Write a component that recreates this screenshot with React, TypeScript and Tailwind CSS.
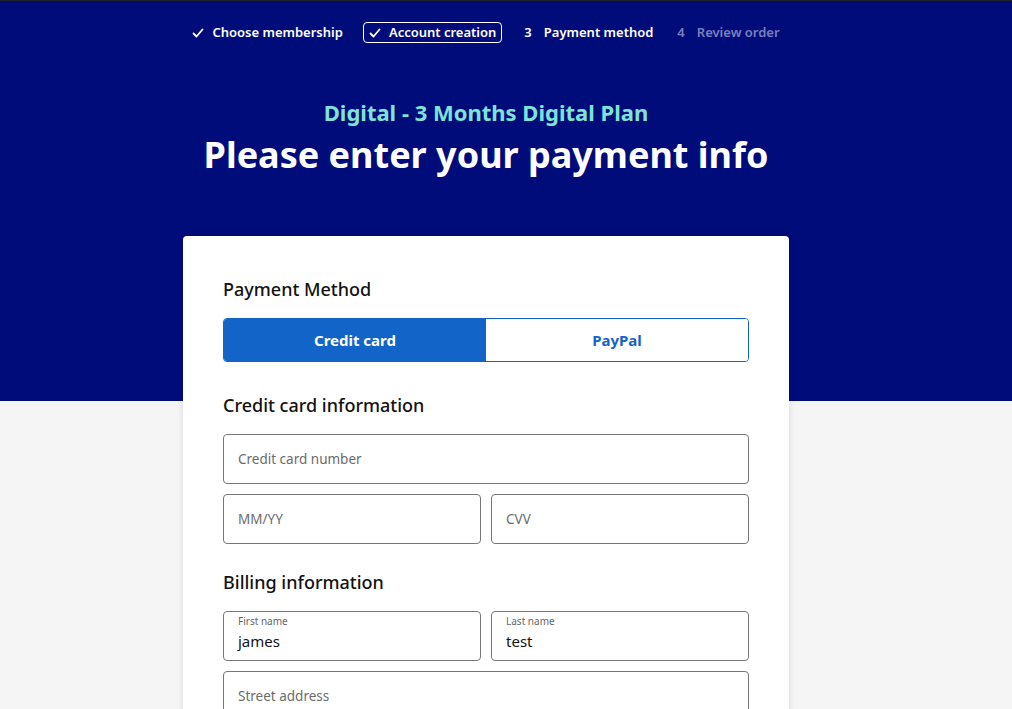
import React from 'react'

function Check() {
  return (
    <svg width="12" height="12" viewBox="0 0 12 12" fill="none">
      <path d="M1.5 6.5 4.5 9.5 10.5 2.5" stroke="white" strokeWidth="1.8" strokeLinecap="round" strokeLinejoin="round" />
    </svg>
  )
}

function Stepper() {
  return (
    <div className="flex h-[63px] items-center justify-center gap-5 pr-10 text-[13px] font-semibold text-white">
      <div className="flex items-center gap-2">
        <Check />
        <span>Choose membership</span>
      </div>
      <div className="flex h-[21px] items-center gap-2 rounded-[4px] border border-white px-[5px]">
        <Check />
        <span>Account creation</span>
      </div>
      <div className="flex items-center gap-3 pl-[2px]">
        <span>3</span>
        <span>Payment method</span>
      </div>
      <div className="flex items-center gap-3 pl-1 text-[#7b80bb]">
        <span>4</span>
        <span>Review order</span>
      </div>
    </div>
  )
}

function Field({ placeholder, label, value, grow }: { placeholder?: string; label?: string; value?: string; grow?: boolean }) {
  return (
    <div
      className={
        grow
          ? 'flex h-[50px] min-w-0 flex-1 flex-col rounded-[4px] border border-[#767676] bg-white px-[14px]'
          : 'flex h-[50px] w-full shrink-0 flex-col rounded-[4px] border border-[#767676] bg-white px-[14px]'
      }
    >
      {label ? (
        <div className="pt-[3px]">
          <div className="text-[10px] leading-3 text-[#666]">{label}</div>
          <div className="mt-[4px] text-[15px] leading-5 text-[#121212]">{value}</div>
        </div>
      ) : (
        <div className="flex h-full items-center text-[13.5px] text-[#6b6b6b]">{placeholder}</div>
      )}
    </div>
  )
}

export default function App() {
  return (
    <div className="min-h-screen bg-[#f5f5f5] font-['Noto_Sans',sans-serif]">
      <div className="h-[401px] border-t border-[#222] bg-[#000c7a]">
        <Stepper />
        <div className="mt-[34px] pr-10 text-center">
          <div className="text-[22px] font-bold leading-7 text-[#7ee3d6]">Digital - 3 Months Digital Plan</div>
          <h1 className="mt-[7px] text-[36px] font-bold leading-[44px] text-white">Please enter your payment info</h1>
        </div>
      </div>
      <div className="-mt-[165px] flex justify-center">
        <div className="ml-[-40px] w-[606px] rounded-[4px] bg-white px-10 pt-[41px] pb-10 shadow-[0_0_6px_rgba(0,0,0,0.12)]">
          <h2 className="text-[18px] font-medium leading-6 text-[#121212]">Payment Method</h2>
          <div className="mt-[17px] flex h-[44px] overflow-hidden rounded-[4px] border border-[#1264c8] text-[15px] font-bold">
            <div className="flex flex-1 items-center justify-center bg-[#1264c8] text-white">Credit card</div>
            <div className="flex flex-1 items-center justify-center bg-white text-[#1264c8]">PayPal</div>
          </div>
          <h2 className="mt-[31px] text-[18px] font-medium leading-6 text-[#121212]">Credit card information</h2>
          <div className="mt-[17px] flex flex-col gap-[10px]">
            <Field placeholder="Credit card number" />
            <div className="flex gap-[10px]">
              <Field grow placeholder="MM/YY" />
              <Field grow placeholder="CVV" />
            </div>
          </div>
          <h2 className="mt-[26px] text-[18px] font-medium leading-6 text-[#121212]">Billing information</h2>
          <div className="mt-[17px] flex flex-col gap-[10px]">
            <div className="flex gap-[10px]">
              <Field grow label="First name" value="james" />
              <Field grow label="Last name" value="test" />
            </div>
            <Field placeholder="Street address" />
          </div>
        </div>
      </div>
    </div>
  )
}
